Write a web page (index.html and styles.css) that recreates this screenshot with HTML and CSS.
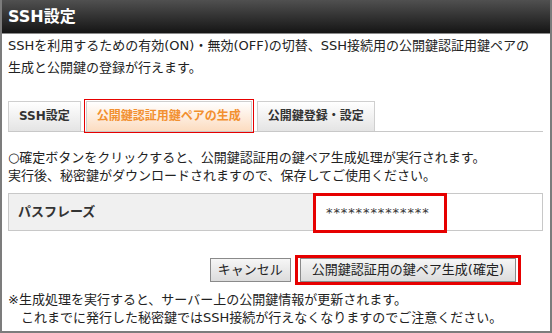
FILE: index.html
```html
<!DOCTYPE html>
<html lang="ja">
<head>
<meta charset="utf-8">
<link rel="stylesheet" href="styles.css">
</head>
<body>
<div class="panel">
  <div class="header">SSH設定</div>
  <div class="content">
    <p class="desc">SSHを利用するための有効(ON)・無効(OFF)の切替、SSH接続用の公開鍵認証用鍵ペアの<br>生成と公開鍵の登録が行えます。</p>
    <div class="tabs">
      <div class="tab">SSH設定</div>
      <div class="tab active">公開鍵認証用鍵ペアの生成</div>
      <div class="tab">公開鍵登録・設定</div>
    </div>
    <p class="info">○確定ボタンをクリックすると、公開鍵認証用の鍵ペア生成処理が実行されます。<br>実行後、秘密鍵がダウンロードされますので、保存してご使用ください。</p>
    <div class="row">
      <div class="label">パスフレーズ</div>
      <div class="value"><div class="pass">**************</div></div>
    </div>
    <div class="buttons">
      <button class="btn cancel">キャンセル</button>
      <div class="hl"><button class="btn submit">公開鍵認証用の鍵ペア生成(確定)</button></div>
    </div>
    <p class="note">※生成処理を実行すると、サーバー上の公開鍵情報が更新されます。<br><span class="indent">これまでに発行した秘密鍵ではSSH接続が行えなくなりますのでご注意ください。</span></p>
  </div>
</div>
</body>
</html>
```
FILE: styles.css
```css
* { box-sizing: border-box; }
html, body { margin: 0; padding: 0; background: #fff; }
body {
  font-family: "DejaVu Sans", "Noto Sans CJK JP", sans-serif;
  font-size: 13px;
  color: #222;
}
.panel {
  width: 552px;
  height: 333px;
  border: 2px solid #7c7c7c;
  border-top: 0;
  overflow: hidden;
}
.header {
  height: 34px;
  margin: 0 -2px;
  padding-left: 8px;
  line-height: 33px;
  background: linear-gradient(#505050, #151515);
  border-bottom: 1px solid #8a8a8a;
  color: #fff;
  font-weight: bold;
  font-size: 16px;
}
.content { padding: 0 7px 0 6px; }
.desc {
  margin: 0;
  padding-top: 1px;
  line-height: 22px;
}
.tabs {
  display: flex;
  gap: 5px;
  margin-top: 22px;
  border-bottom: 1px solid #c8c8c8;
  height: 31px;
}
.tab {
  height: 30px;
  padding: 0 10px;
  line-height: 29px;
  font-size: 12px;
  font-weight: bold;
  color: #333;
  border: 1px solid #cfcfcf;
  border-bottom: 0;
  background: linear-gradient(#ffffff, #e4e4e4);
}
.tab.active {
  color: #f29030;
  background: linear-gradient(#ffffff, #fcdcc0);
  outline: 1px solid #e60000;
  outline-offset: 1px;
}
.info {
  margin: 17px 0 0;
  line-height: 18px;
}
.row {
  display: flex;
  height: 38px;
  margin-top: 8px;
  border: 1px solid #c8c8c8;
}
.label {
  width: 304px;
  background: #f0f0f0;
  padding-left: 9px;
  line-height: 36px;
  font-weight: bold;
  color: #333;
}
.value { flex: 1; display: flex; }
.pass {
  width: 134px;
  height: 40px;
  margin: -1px 0 -2px 0;
  border: 3px solid #e60000;
  padding-left: 10px;
  line-height: 34px;
  font-size: 13px;
  letter-spacing: 0.9px;
  color: #333;
  background: #fff;
}
.buttons {
  display: flex;
  justify-content: flex-end;
  align-items: center;
  gap: 4px;
  margin-top: 24px;
  padding-right: 22px;
  height: 30px;
}
.btn {
  font-family: inherit;
  font-size: 13px;
  color: #222;
  height: 24px;
  border: 1px solid #8a8a8a;
  border-radius: 0;
  background: linear-gradient(#f6f6f6, #dcdcdc);
  line-height: 22px;
}
.cancel { padding: 0 7px; }
.submit { padding: 0 11px; }
.hl {
  border: 3px solid #e60000;
  padding: 0 2px;
  height: 30px;
  display: flex;
  align-items: center;
}
.note {
  margin: 6px 0 0;
  line-height: 18px;
}
.indent { padding-left: 13px; }
```
